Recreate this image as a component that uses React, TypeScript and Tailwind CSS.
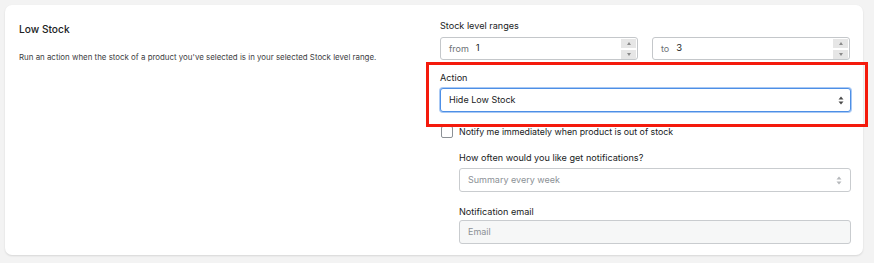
import React from 'react';

const font = { fontFamily: 'Inter, "Noto Sans", sans-serif' };

function UpDown({ tone }: { tone: string }) {
  return (
    <svg width="6" height="9" viewBox="0 0 6 9" className={tone}>
      <path d="M3 0.5 L5.5 3.5 H0.5 Z" fill="currentColor" />
      <path d="M3 8.5 L5.5 5.5 H0.5 Z" fill="currentColor" />
    </svg>
  );
}

function Stepper() {
  return (
    <div className="flex flex-col gap-[2px] py-[1px]">
      <div className="w-[15px] h-[9px] bg-[#e6e6e6] flex items-center justify-center">
        <svg width="4" height="3" viewBox="0 0 4 3"><path d="M2 0 L4 3 H0 Z" fill="#8a8a8a" /></svg>
      </div>
      <div className="w-[15px] h-[9px] bg-[#e6e6e6] flex items-center justify-center">
        <svg width="4" height="3" viewBox="0 0 4 3"><path d="M2 3 L4 0 H0 Z" fill="#8a8a8a" /></svg>
      </div>
    </div>
  );
}

function RangeInput({ prefix, value }: { prefix: string; value: string }) {
  return (
    <div className="flex-1 h-[23px] border border-[#c4c7ca] rounded-[3px] flex items-center pl-[8px] pr-[1px] bg-white">
      <span className="text-[9px] text-[#6d7175]">{prefix}</span>
      <span className="ml-[7px] text-[9.5px] text-[#202223] flex-1">{value}</span>
      <Stepper />
    </div>
  );
}

export default function App() {
  return (
    <div className="w-[874px] h-[263px] bg-[#f3f3f3] p-[5px]" style={font}>
      <div className="w-[858px] bg-white rounded-[7px] shadow-[0_1px_2px_rgba(0,0,0,0.12)] flex pl-[14px] pr-[12px] pt-[13px] pb-[11px]">
        <div className="w-[421px] shrink-0">
          <h2 className="text-[10.2px] leading-[16px] font-medium text-[#202223] mt-[3px]">Low Stock</h2>
          <p className="text-[7.9px] leading-[12px] text-[#3d4043] mt-[14px]">
            Run an action when the stock of a product you've selected is in your selected Stock level range.
          </p>
        </div>

        <div className="flex-1 flex flex-col">
          <label className="text-[9.1px] leading-[16px] text-[#202223]">Stock level ranges</label>
          <div className="flex gap-[14px] mt-[3px] pr-[1px]">
            <RangeInput prefix="from" value="1" />
            <RangeInput prefix="to" value="3" />
          </div>

          <div className="relative mt-[10px]">
            <label className="block text-[9.1px] leading-[16px] text-[#202223]">Action</label>
            <div className="mt-[2px] h-[24px] border border-[#4d8fe6] shadow-[0_0_0_1px_#a9c9f4] rounded-[3px] flex items-center justify-between pl-[8px] pr-[6px] bg-white">
              <span className="text-[9px] text-[#202223]">Hide Low Stock</span>
              <UpDown tone="text-[#4a4a4a]" />
            </div>
            <div className="absolute left-[-14px] right-[-17px] top-[-8px] bottom-[-15px] border-[3px] border-[#f41a0c]" />
          </div>

          <div className="flex items-center gap-[6px] mt-[14px] pl-[1px]">
            <div className="w-[12px] h-[12px] border border-[#8c9196] rounded-[2px] bg-white" />
            <span className="text-[8.8px] leading-[12px] text-[#202223]">Notify me immediately when product is out of stock</span>
          </div>

          <div className="pl-[19px] flex flex-col">
            <label className="text-[9.1px] leading-[16px] text-[#202223] mt-[12px]">How often would you like get notifications?</label>
            <div className="mt-[2px] h-[24px] border border-[#c9cccf] rounded-[3px] flex items-center justify-between pl-[8px] pr-[8px] bg-white">
              <span className="text-[9px] text-[#8c9196]">Summary every week</span>
              <UpDown tone="text-[#b5b8bb]" />
            </div>
            <label className="text-[9.1px] leading-[16px] text-[#202223] mt-[12px]">Notification email</label>
            <div className="h-[24px] border border-[#c9cccf] rounded-[3px] flex items-center pl-[8px] bg-[#f6f7f7]">
              <span className="text-[9px] text-[#8c9196]">Email</span>
            </div>
          </div>
        </div>
      </div>
    </div>
  );
}
